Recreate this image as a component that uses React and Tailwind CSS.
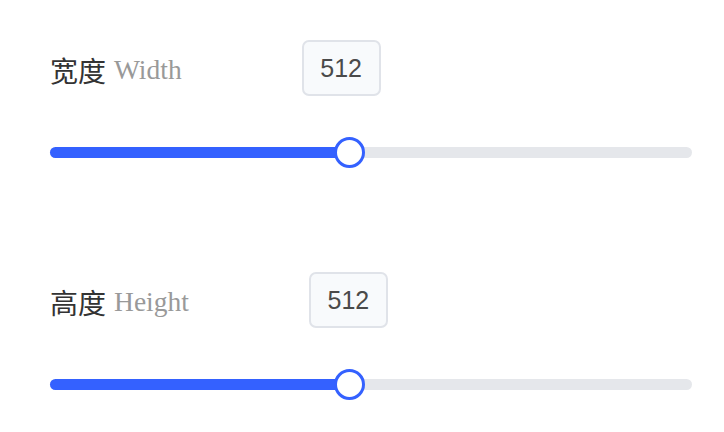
import { useState } from "react";

function SizeSlider({ label, en, value, min, max, onChange }) {
  const pct = ((value - min) / (max - min)) * 100;

  return (
    <div className="flex flex-col">
      <div className="flex items-center h-[56px]">
        <span className="mt-[4px] text-[28px] text-[#333] font-['Noto_Sans_CJK_SC',sans-serif] leading-none">
          {label}
        </span>
        <span className="mt-[4px] text-[27.5px] text-[#999] font-['Liberation_Serif',serif] leading-none ml-[8px]">
          {en}
        </span>
        <input
          type="text"
          value={value}
          onChange={(e) => onChange(Number(e.target.value) || 0)}
          className="ml-[120px] w-[79px] h-[56px] border-2 border-[#e0e3e9] rounded-[7px] bg-[#f8fafc] text-center text-[25px] text-[#4a4a4a] font-['Liberation_Sans',sans-serif] outline-none"
        />
      </div>
      <div className="relative flex items-center h-[31px] mt-[41px]">
        <div className="w-full h-[11px] rounded-full bg-[#e5e7eb]" />
        <div
          className="absolute left-0 h-[11px] rounded-full bg-[#3461ff]"
          style={{ width: `${pct}%` }}
        />
        <div
          className="absolute w-[31px] h-[31px] -ml-[16px] rounded-full border-[3.5px] border-[#3461ff] bg-white"
          style={{ left: `${pct}%` }}
        />
      </div>
    </div>
  );
}

export default function App() {
  const [width, setWidth] = useState(512);
  const [height, setHeight] = useState(512);

  return (
    <div className="w-[724px] h-[432px] bg-white pl-[50px] pr-[32px] pt-[40px] flex flex-col gap-[104px]">
      <SizeSlider label="宽度" en="Width" value={width} min={64} max={1024} onChange={setWidth} />
      <SizeSlider label="高度" en="Height" value={height} min={64} max={1024} onChange={setHeight} />
    </div>
  );
}
